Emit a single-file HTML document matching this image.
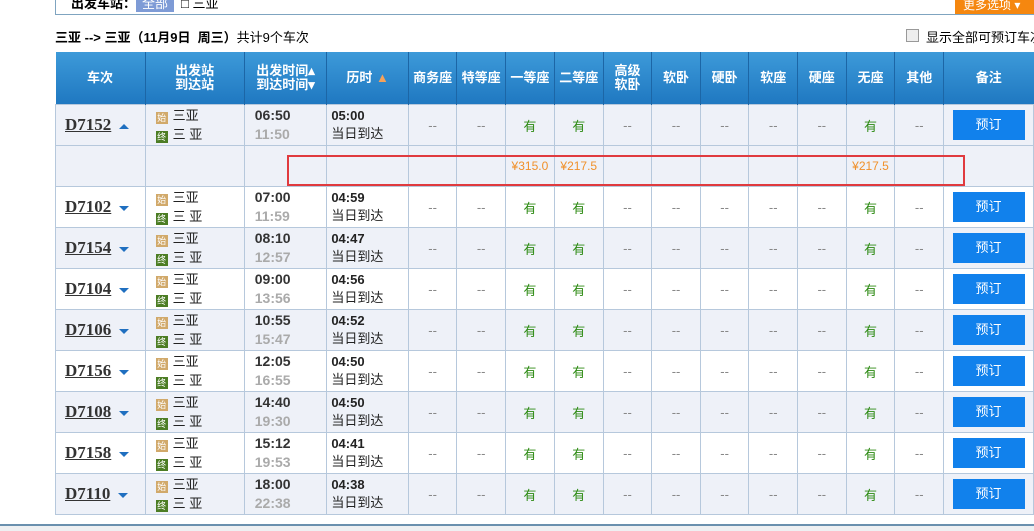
<!DOCTYPE html><html><head><meta charset="utf-8"><style>
body{margin:0;width:1034px;height:531px;overflow:hidden;background:#fff;font-family:"Liberation Sans","Noto Sans CJK SC",sans-serif;position:relative}
.top{position:absolute;left:55px;top:-2px;width:990px;height:16px;border:1px solid #7fa4c0;border-top:none}
.top span{position:absolute;top:-5px;font-size:13px}
.org{position:absolute;left:955px;top:0;width:79px;height:14px;background:#f5870f;color:#fff;font-size:12px;line-height:10px;padding-left:8px;box-sizing:border-box;white-space:nowrap;overflow:hidden}
.info{position:absolute;left:55px;top:27px;font-size:13px;font-weight:bold;white-space:nowrap}
.info b{font-weight:normal}
.chk{position:absolute;left:906px;top:29px;width:11px;height:11px;border:1px solid #999;background:#eee}
.showall{position:absolute;left:926px;top:27px;font-size:13px;white-space:nowrap}
table{position:absolute;left:55px;top:52px;border-collapse:collapse;table-layout:fixed;font-size:13px}
th{height:52px;background:linear-gradient(#3d9ad9,#1f78c1);color:#fff;font-weight:bold;font-size:13px;line-height:14px;padding:0;border-left:1px solid #1c66a6}
td{border:1px solid #b6c8dc;padding:0;text-align:center;color:#888;height:40px}
tr.l td{background:#eef1f8}
tr.w td{background:#fff}
.tn{text-align:left;padding-left:9px;font-size:17px;font-weight:bold;color:#333;text-decoration:underline;font-family:"Liberation Serif",serif}
.ar{display:inline-block;width:0;height:0;border-left:5px solid transparent;border-right:5px solid transparent;border-top:5px solid #1f6fc0;margin-left:8px;vertical-align:middle;text-decoration:none}
.ar.u{border-top:none;border-bottom:5px solid #1f6fc0}
.st{text-align:left;padding-left:10px;color:#222;line-height:19px}
.i{display:inline-block;width:12px;height:12px;font-size:9px;line-height:12px;color:#fff;text-align:center;margin-right:5px;vertical-align:-1px}
.s{background:#d1a96a}.e{background:#4c7d24}
.tm{text-align:left;padding-left:10px;font-weight:bold;line-height:19px;font-size:14px;color:#333}
.tm i{font-style:normal;color:#aaa}
.du{text-align:left;padding-left:4px;line-height:18px;color:#222}
.du b{font-size:13px}
.y{color:#2c8a12}
.btn{display:inline-block;width:72px;height:30px;line-height:30px;background:#1181ec;color:#fff;font-size:13px}
.p{color:#f0902a;font-size:12px}
.red{position:absolute;left:287px;top:155px;width:674px;height:27px;border:2px solid #e03a3e}
.bot{position:absolute;left:0;top:524px;width:1034px;height:2px;background:#6a90ae}
.bg{position:absolute;left:0;top:526px;width:1034px;height:5px;background:#eef0f2}
</style></head><body>
<div class="top"><span style="left:15px;font-weight:bold">出发车站：</span><span style="left:80px;background:#7e9bd6;color:#fff;padding:0 6px">全部</span><span style="left:125px">□ 三亚</span></div>
<div class="org">更多选项 ▾</div>
<div class="info">三亚 --&gt; 三亚（11月9日&nbsp; 周三）<b>共计9个车次</b></div>
<div class="chk"></div><div class="showall">显示全部可预订车次</div>
<table>
<colgroup><col width="90"><col width="100"><col width="83"><col width="82"><col width="49"><col width="49"><col width="49"><col width="49"><col width="49"><col width="49"><col width="49"><col width="49"><col width="49"><col width="49"><col width="49"><col width="90"></colgroup>
<tr><th style="border-left:none">车次</th><th>出发站<br>到达站</th><th>出发时间▴<br>到达时间▾</th><th>历时 <span style="color:#f5a25a">▲</span></th><th>商务座</th><th>特等座</th><th>一等座</th><th>二等座</th><th>高级<br>软卧</th><th>软卧</th><th>硬卧</th><th>软座</th><th>硬座</th><th>无座</th><th>其他</th><th>备注</th></tr>
<tr class="l"><td class="tn">D7152<span class="ar u"></span></td><td class="st"><span class="i s">始</span>三亚<br><span class="i e">终</span>三 亚</td><td class="tm">06:50<br><i>11:50</i></td><td class="du"><b>05:00</b><br>当日到达</td><td>--</td><td>--</td><td class="y">有</td><td class="y">有</td><td>--</td><td>--</td><td>--</td><td>--</td><td>--</td><td class="y">有</td><td>--</td><td><span class="btn">预订</span></td></tr>
<tr class="l"><td></td><td></td><td></td><td></td><td></td><td></td><td class="p">¥315.0</td><td class="p">¥217.5</td><td></td><td></td><td></td><td></td><td></td><td class="p">¥217.5</td><td></td><td></td></tr>
<tr class="w"><td class="tn">D7102<span class="ar"></span></td><td class="st"><span class="i s">始</span>三亚<br><span class="i e">终</span>三 亚</td><td class="tm">07:00<br><i>11:59</i></td><td class="du"><b>04:59</b><br>当日到达</td><td>--</td><td>--</td><td class="y">有</td><td class="y">有</td><td>--</td><td>--</td><td>--</td><td>--</td><td>--</td><td class="y">有</td><td>--</td><td><span class="btn">预订</span></td></tr>
<tr class="l"><td class="tn">D7154<span class="ar"></span></td><td class="st"><span class="i s">始</span>三亚<br><span class="i e">终</span>三 亚</td><td class="tm">08:10<br><i>12:57</i></td><td class="du"><b>04:47</b><br>当日到达</td><td>--</td><td>--</td><td class="y">有</td><td class="y">有</td><td>--</td><td>--</td><td>--</td><td>--</td><td>--</td><td class="y">有</td><td>--</td><td><span class="btn">预订</span></td></tr>
<tr class="w"><td class="tn">D7104<span class="ar"></span></td><td class="st"><span class="i s">始</span>三亚<br><span class="i e">终</span>三 亚</td><td class="tm">09:00<br><i>13:56</i></td><td class="du"><b>04:56</b><br>当日到达</td><td>--</td><td>--</td><td class="y">有</td><td class="y">有</td><td>--</td><td>--</td><td>--</td><td>--</td><td>--</td><td class="y">有</td><td>--</td><td><span class="btn">预订</span></td></tr>
<tr class="l"><td class="tn">D7106<span class="ar"></span></td><td class="st"><span class="i s">始</span>三亚<br><span class="i e">终</span>三 亚</td><td class="tm">10:55<br><i>15:47</i></td><td class="du"><b>04:52</b><br>当日到达</td><td>--</td><td>--</td><td class="y">有</td><td class="y">有</td><td>--</td><td>--</td><td>--</td><td>--</td><td>--</td><td class="y">有</td><td>--</td><td><span class="btn">预订</span></td></tr>
<tr class="w"><td class="tn">D7156<span class="ar"></span></td><td class="st"><span class="i s">始</span>三亚<br><span class="i e">终</span>三 亚</td><td class="tm">12:05<br><i>16:55</i></td><td class="du"><b>04:50</b><br>当日到达</td><td>--</td><td>--</td><td class="y">有</td><td class="y">有</td><td>--</td><td>--</td><td>--</td><td>--</td><td>--</td><td class="y">有</td><td>--</td><td><span class="btn">预订</span></td></tr>
<tr class="l"><td class="tn">D7108<span class="ar"></span></td><td class="st"><span class="i s">始</span>三亚<br><span class="i e">终</span>三 亚</td><td class="tm">14:40<br><i>19:30</i></td><td class="du"><b>04:50</b><br>当日到达</td><td>--</td><td>--</td><td class="y">有</td><td class="y">有</td><td>--</td><td>--</td><td>--</td><td>--</td><td>--</td><td class="y">有</td><td>--</td><td><span class="btn">预订</span></td></tr>
<tr class="w"><td class="tn">D7158<span class="ar"></span></td><td class="st"><span class="i s">始</span>三亚<br><span class="i e">终</span>三 亚</td><td class="tm">15:12<br><i>19:53</i></td><td class="du"><b>04:41</b><br>当日到达</td><td>--</td><td>--</td><td class="y">有</td><td class="y">有</td><td>--</td><td>--</td><td>--</td><td>--</td><td>--</td><td class="y">有</td><td>--</td><td><span class="btn">预订</span></td></tr>
<tr class="l"><td class="tn">D7110<span class="ar"></span></td><td class="st"><span class="i s">始</span>三亚<br><span class="i e">终</span>三 亚</td><td class="tm">18:00<br><i>22:38</i></td><td class="du"><b>04:38</b><br>当日到达</td><td>--</td><td>--</td><td class="y">有</td><td class="y">有</td><td>--</td><td>--</td><td>--</td><td>--</td><td>--</td><td class="y">有</td><td>--</td><td><span class="btn">预订</span></td></tr>
</table>
<div class="red"></div>
<div class="bot"></div><div class="bg"></div>
</body></html>
